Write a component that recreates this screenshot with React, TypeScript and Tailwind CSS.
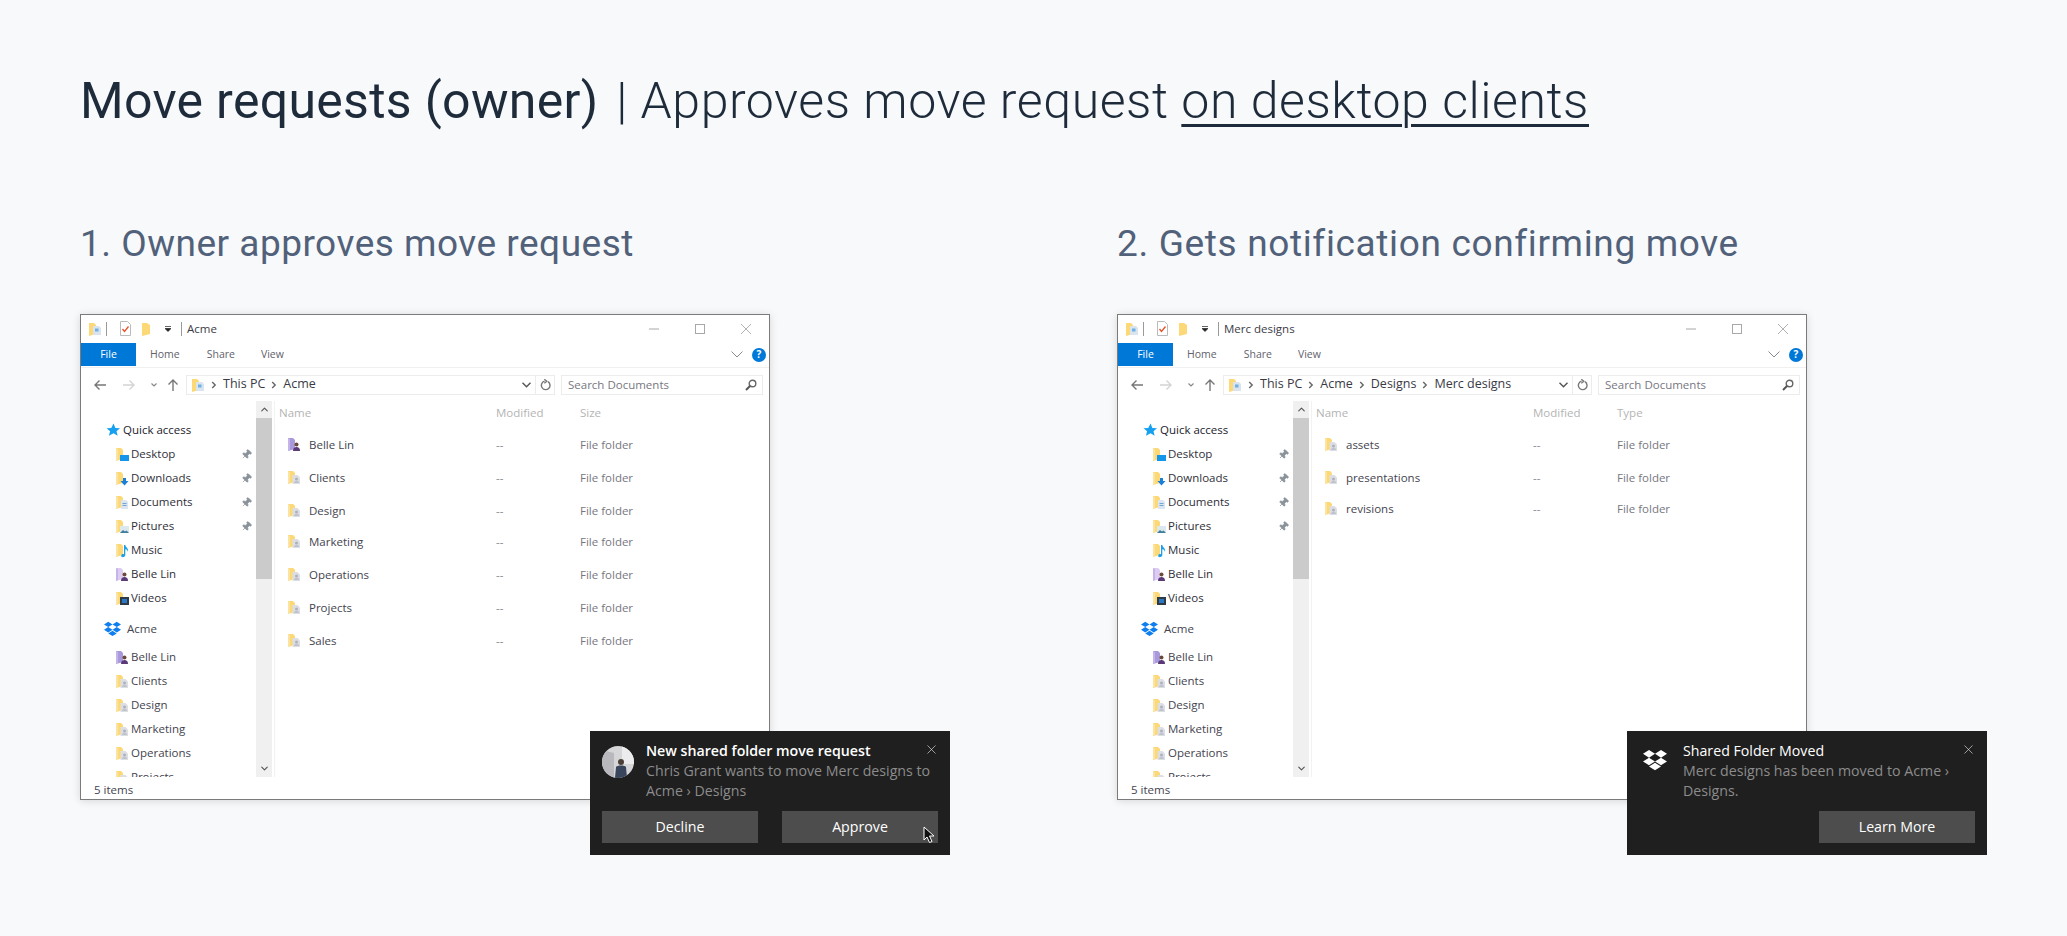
import React from 'react';
import { X, ChevronDown, ChevronUp, Pin } from 'lucide-react';

type FolderKind = 'shared' | 'member' | 'memberLight' | 'desktop' | 'downloads' | 'documents' | 'pictures' | 'music' | 'videos' | 'plain';

const FolderIcon = ({ kind = 'shared' }: { kind?: FolderKind }) => {
  const purple = kind === 'member' || kind === 'memberLight';
  const body = kind === 'member' ? '#a898dc' : kind === 'memberLight' ? '#dcccf2' : '#fcd876';
  return (
    <svg width="14" height="15" viewBox="0 0 14 15" className="shrink-0">
      <path d="M1 1h5l2 2v9l-7 2z" fill={body} />
      <path d="M1 1v13l2-1V2z" fill={purple ? '#c4b4ea' : '#fbe4a2'} />
      {kind === 'shared' && (
        <>
          <path d="M5.500 5h5l2.500 2.500V14H5.500z" fill="#dcdee4" />
          <circle cx="9.500" cy="9" r="1.500" fill="#aeb2bb" />
          <path d="M7 13c0-1.500 1-2.200 2.500-2.200s2.500.7 2.500 2.200z" fill="#bfc3cb" />
        </>
      )}
      {purple && (
        <>
          <circle cx="9.500" cy="7.500" r="2" fill="#6b4a3a" />
          <path d="M6 14c0-3 1.500-4 3.500-4s3.500 1 3.500 4z" fill="#5b3a78" />
        </>
      )}
      {kind === 'desktop' && <rect x="5" y="8" width="9" height="6" fill="#1295ea" />}
      {kind === 'downloads' && <path d="M8 7h3v3h2.500l-4 4.500-4-4.500H8z" fill="#1a7fd6" />}
      {kind === 'documents' && (
        <>
          <path d="M6 5h5l2 2v7H6z" fill="#dbe6f0" />
          <path d="M7.500 8h4v1h-4zM7.500 10h4v1h-4z" fill="#6ea6d8" />
        </>
      )}
      {kind === 'pictures' && (
        <>
          <rect x="5" y="7" width="9" height="7" fill="#dbe8ee" />
          <path d="M5 14l3-3 2 1.500 1.500-1 2.500 2.500z" fill="#3f7d9c" />
        </>
      )}
      {kind === 'music' && <path d="M9 2h1.300c.3 2.500 3.700 3.300 2.700 7-.3-1.700-1.300-2.600-2.700-2.800V12c0 1.300-1.200 2.200-2.500 2.200S6 13.300 6.300 12.200C6.600 11.200 8 10.800 9 11.200z" fill="#1ca0ea" />}
      {kind === 'videos' && (
        <>
          <rect x="5" y="6" width="9" height="8" fill="#2f3a46" />
          <rect x="7" y="8" width="5" height="4" fill="#2b78c2" />
        </>
      )}
    </svg>
  );
};

const ExplorerIcon = () => (
  <svg width="14" height="14" viewBox="0 0 14 14" className="shrink-0">
    <path d="M1 1h5l2 2v9l-7 2z" fill="#fcd876" />
    <path d="M5 4h6l2 2v7H5z" fill="#d9e4ee" />
    <path d="M7 6.500h3.500v3H7z" fill="#6fb0e6" />
  </svg>
);

const DropboxLogo = ({ color, size }: { color: string; size: number }) => (
  <svg width={size} height={size * 0.92} viewBox="0 0 24 22" className="shrink-0">
    <path d="M6 1l6 3.800-6 3.800L0 4.800zM18 1l6 3.800-6 3.800-6-3.800zM0 12.400l6-3.800 6 3.800-6 3.800zM18 8.600l6 3.800-6 3.800-6-3.800zM6 17.500l6-3.800 6 3.800-6 3.800z" fill={color} />
  </svg>
);

const Crumb = () => (
  <svg width="6" height="8" viewBox="0 0 6 8" className="shrink-0">
    <path d="M1.200 1l3 3-3 3" fill="none" stroke="#666" strokeWidth="1.400" />
  </svg>
);

const NavArrow = ({ d, color, className }: { d: string; color: string; className?: string }) => (
  <svg width="12" height="12" viewBox="0 0 12 12" className={`shrink-0 ${className ?? ''}`}>
    <path d={d} fill="none" stroke={color} strokeWidth="1.400" />
  </svg>
);

const navItems: { label: string; kind: FolderKind; pinned?: boolean }[] = [
  { label: 'Desktop', kind: 'desktop', pinned: true },
  { label: 'Downloads', kind: 'downloads', pinned: true },
  { label: 'Documents', kind: 'documents', pinned: true },
  { label: 'Pictures', kind: 'pictures', pinned: true },
  { label: 'Music', kind: 'music' },
  { label: 'Belle Lin', kind: 'memberLight' },
  { label: 'Videos', kind: 'videos' },
];

const acmeItems: { label: string; kind: FolderKind }[] = [
  { label: 'Belle Lin', kind: 'member' },
  { label: 'Clients', kind: 'shared' },
  { label: 'Design', kind: 'shared' },
  { label: 'Marketing', kind: 'shared' },
  { label: 'Operations', kind: 'shared' },
  { label: 'Projects', kind: 'shared' },
];

interface FileRow {
  name: string;
  kind: FolderKind;
  row: string;
}

interface WindowProps {
  title: string;
  crumbs: string[];
  lastCol: string;
  files: FileRow[];
  children: React.ReactNode;
}

const ExplorerWindow = ({ title, crumbs, lastCol, files, children }: WindowProps) => (
  <div className="relative w-[690px] h-[486px] bg-white border border-[#7b7b7b] shadow-[0_1px_8px_rgba(0,0,0,0.14)] font-['Open_Sans',sans-serif] text-[11.5px] text-[#44444f]">
    <div className="h-[28px] flex items-center pl-[7px] pb-[1px]">
      <ExplorerIcon />
      <div className="w-px h-[14px] bg-[#9a9a9a] ml-[4px]" />
      <svg width="13" height="15" viewBox="0 0 13 15" className="ml-[12px]">
        <path d="M1.500.5h7l3 3v11h-10z" fill="#fff" stroke="#bbb" />
        <path d="M3.500 8l2 2.500 4-5" fill="none" stroke="#e8502a" strokeWidth="1.300" />
      </svg>
      <svg width="10" height="14" viewBox="0 0 10 14" className="ml-[10px]">
        <path d="M0 1h5l3 2v9l-8 2z" fill="#fcd876" />
      </svg>
      <svg width="6" height="6" viewBox="0 0 6 6" className="ml-[13px]">
        <path d="M0 .5h6M0 2.500h6l-3 3z" stroke="#222" strokeWidth="0.700" fill="#222" />
      </svg>
      <div className="w-px h-[14px] bg-[#9a9a9a] ml-[10px]" />
      <span className="ml-[5px] text-[#3c3c46]">{title}</span>
      <div className="ml-auto flex items-center gap-[36px] pr-[18px]">
        <svg width="10" height="10" viewBox="0 0 10 10"><path d="M0 5h10" stroke="#a8a8a8" strokeWidth="1" /></svg>
        <svg width="10" height="10" viewBox="0 0 10 10"><rect x=".5" y=".5" width="9" height="9" fill="none" stroke="#a8a8a8" /></svg>
        <svg width="10" height="10" viewBox="0 0 10 10"><path d="M0 0l10 10M10 0L0 10" stroke="#a8a8a8" strokeWidth="0.900" /></svg>
      </div>
    </div>
    <div className="h-[25px] flex items-start border-b border-[#f0f0f0] text-[10.500px] text-[#62626c]">
      <div className="w-[55px] h-[23px] bg-[#0078d7] text-white flex items-center justify-center">File</div>
      <span className="ml-[14px] leading-[23px]">Home</span>
      <span className="ml-[27px] leading-[23px]">Share</span>
      <span className="ml-[26px] leading-[23px]">View</span>
      <div className="ml-auto flex items-center h-[23px] pr-[3px]">
        <svg width="12" height="7" viewBox="0 0 12 7"><path d="M.5.5L6 6l5.500-5.500" fill="none" stroke="#8a8a8a" /></svg>
        <div className="ml-[9px] w-[14px] h-[14px] rounded-full bg-[#0078d7] text-white text-[10px] font-bold flex items-center justify-center">?</div>
      </div>
    </div>
    <div className="h-[33px] flex items-center pl-[13px] pr-[6px]">
      <NavArrow d="M12 6H1M5.500 1.500L1 6l4.500 4.500" color="#777" />
      <NavArrow d="M0 6h11M6.500 1.500L11 6l-4.500 4.500" color="#d4d4d4" className="ml-[17px]" />
      <svg width="6" height="4" viewBox="0 0 6 4" className="ml-[16px]"><path d="M.5.500L3 3 5.500.5" fill="none" stroke="#888" strokeWidth="1.200" /></svg>
      <NavArrow d="M6 12V1M1.500 5.500L6 1l4.500 4.500" color="#777" className="ml-[10px]" />
      <div className="ml-[7px] w-[369px] h-[20px] border border-[#ececec] flex items-center pl-[4px] text-[12.5px] text-[#3a3a44]">
        <ExplorerIcon />
        {crumbs.map((c) => (
          <React.Fragment key={c}>
            <span className="mx-[6px]"><Crumb /></span>
            <span>{c}</span>
          </React.Fragment>
        ))}
        <div className="ml-auto flex items-center h-full">
          <svg width="9" height="6" viewBox="0 0 9 6" className="mr-[4px]"><path d="M.5.800l4 4 4-4" fill="none" stroke="#555" strokeWidth="1.400" /></svg>
          <div className="w-[19px] h-full border-l border-[#ececec] flex items-center justify-center">
            <svg width="11" height="12" viewBox="0 0 11 12"><path d="M8 2.700a4.300 4.300 0 1 1-3.500-.5M4.300.3l2.500 2-2.500 2" fill="none" stroke="#777" strokeWidth="1.400" /></svg>
          </div>
        </div>
      </div>
      <div className="ml-[6px] flex-1 h-[20px] border border-[#ececec] flex items-center pl-[6px] pr-[5px] text-[#77777f]">
        <span>Search Documents</span>
        <svg width="12" height="12" viewBox="0 0 12 12" className="ml-auto">
          <circle cx="7.500" cy="4.500" r="3.300" fill="none" stroke="#666" strokeWidth="1.400" />
          <path d="M5 7L1 11" stroke="#555" strokeWidth="2" />
        </svg>
      </div>
    </div>
    <div className="h-[376px] flex">
      <div className="w-[175px] h-full overflow-hidden pt-[17px] text-[#2f2f39]">
        <div className="h-6 flex items-center pl-[25px] text-[#22222c]">
          <svg width="14" height="14" viewBox="0 0 24 24"><path d="M13 1l3 7.500 8 .5-6 5 2 8-7-4.500L5 22l2-8-6-5 8-.5z" fill="#16a0f0" /></svg>
          <span className="ml-[3px]">Quick access</span>
        </div>
        {navItems.map((n) => (
          <div key={n.label} className="h-6 flex items-center pl-[34px] pr-[4px]">
            <FolderIcon kind={n.kind} />
            <span className="ml-[2px]">{n.label}</span>
            {n.pinned && <Pin size={11} strokeWidth={1.500} className="ml-auto rotate-45 text-[#8a929a] fill-[#8a929a]" />}
          </div>
        ))}
        <div className="h-6 mt-[7px] flex items-center pl-[23px] text-[#44444f]">
          <DropboxLogo color="#0f7ff0" size={17} />
          <span className="ml-[6px]">Acme</span>
        </div>
        <div className="mt-[4px]">
          {acmeItems.map((n) => (
            <div key={n.label} className="h-6 flex items-center pl-[34px] text-[#44444f]">
              <FolderIcon kind={n.kind} />
              <span className="ml-[2px]">{n.label}</span>
            </div>
          ))}
        </div>
      </div>
      <div className="w-[16px] h-full bg-[#f0f0f0] flex flex-col">
        <div className="h-[17px] flex items-center justify-center">
          <ChevronUp size={11} strokeWidth={2.500} className="text-[#555]" />
        </div>
        <div className="h-[161px] bg-[#cbcbcb]" />
        <div className="mt-auto h-[17px] flex items-center justify-center">
          <ChevronDown size={11} strokeWidth={2.500} className="text-[#555]" />
        </div>
      </div>
      <div className="flex-1 ml-[2px] border-l border-[#f2f2f2] pl-[4px]">
        <div className="h-[27px] flex items-center text-[#b4b4b4] pb-[3px]">
          <span className="w-[217px]">Name</span>
          <span className="w-[84px]">Modified</span>
          <span>{lastCol}</span>
        </div>
        {files.map((f) => (
          <div key={f.name} className={`${f.row} flex items-center`}>
            <div className="w-[217px] flex items-center pl-[8px]">
              <FolderIcon kind={f.kind} />
              <span className="ml-[8px]">{f.name}</span>
            </div>
            <span className="w-[84px] text-[#88888f]">--</span>
            <span className="text-[#77777f]">File folder</span>
          </div>
        ))}
      </div>
    </div>
    <div className="h-[22px] flex items-center pl-[13px] pt-[3px] text-[#44444f]">5 items</div>
    {children}
  </div>
);

const Toast = ({ children }: { children: React.ReactNode }) => (
  <div className="absolute left-[509px] top-[416px] w-[360px] h-[124px] bg-[#1f1f1f] px-[12px] pt-[10px] font-['Open_Sans',sans-serif] text-[14.200px] leading-[20px]">
    <X size={15} strokeWidth={1} className="absolute right-[11px] top-[11px] text-[#e8e8e8]" />
    {children}
  </div>
);

const ToastButton = ({ label }: { label: string }) => (
  <div className="w-[156px] h-[32px] bg-[#4d4d4d] text-white flex items-center justify-center">{label}</div>
);

export default function App() {
  return (
    <div className="h-[936px] overflow-hidden bg-[#f7f9fb] pl-[80px] pt-[71px] font-['Roboto',sans-serif]">
      <h1 className="text-[50px] leading-[60px] font-light text-[#1e2b3a] whitespace-nowrap tracking-[0.55px]">
        <span className="font-normal tracking-[0.3px] mr-[5px]">Move requests (owner)</span> | Approves move request{' '}
        <span className="underline decoration-[3px] underline-offset-[6px]">on desktop clients</span>
      </h1>
      <div className="mt-[91px] grid grid-cols-[1037px_1fr]">
        <div>
          <h2 className="text-[37px] leading-[44px] text-[#52617a] tracking-[0.5px]">1. Owner approves move request</h2>
          <div className="mt-[48px]">
            <ExplorerWindow
              title="Acme"
              crumbs={['This PC', 'Acme']}
              lastCol="Size"
              files={[
                { name: 'Belle Lin', kind: 'member', row: 'h-[33px]' },
                { name: 'Clients', kind: 'shared', row: 'h-[33px]' },
                { name: 'Design', kind: 'shared', row: 'h-[33px]' },
                { name: 'Marketing', kind: 'shared', row: 'h-[33px] -mt-[2px]' },
                { name: 'Operations', kind: 'shared', row: 'h-[33px]' },
                { name: 'Projects', kind: 'shared', row: 'h-[33px]' },
                { name: 'Sales', kind: 'shared', row: 'h-[33px]' },
              ]}
            >
              <Toast>
                <div className="flex">
                  <svg width="32" height="32" viewBox="0 0 32 32" className="shrink-0 mt-[5px]">
                    <defs>
                      <clipPath id="avatar"><circle cx="16" cy="16" r="16" /></clipPath>
                    </defs>
                    <g clipPath="url(#avatar)">
                      <rect width="32" height="32" fill="#d6d6d8" />
                      <path d="M0 4l12 3v25H0z" fill="#b9b9bd" />
                      <path d="M20 0h12v18H20z" fill="#ececee" />
                      <circle cx="19" cy="16" r="3" fill="#4a4038" />
                      <path d="M13 32l1-11c1-2 9-2 10 0l1 11z" fill="#38455a" />
                    </g>
                  </svg>
                  <div className="ml-[12px] w-[296px]">
                    <div className="text-white font-semibold">New shared folder move request</div>
                    <div className="text-[#8c8c8c]">Chris Grant wants to move Merc designs to Acme › Designs</div>
                  </div>
                </div>
                <div className="mt-[10px] flex justify-between relative">
                  <ToastButton label="Decline" />
                  <ToastButton label="Approve" />
                  <svg width="12" height="18" viewBox="0 0 12 18" className="absolute right-[3px] top-[15px]">
                    <path d="M1 1v13l3-3 2.500 5.500 2.500-1L6.500 10H11z" fill="#111" stroke="#fff" strokeWidth="1" />
                  </svg>
                </div>
              </Toast>
            </ExplorerWindow>
          </div>
        </div>
        <div>
          <h2 className="text-[37px] leading-[44px] text-[#52617a] tracking-[0.65px]">2. Gets notification confirming move</h2>
          <div className="mt-[48px]">
            <ExplorerWindow
              title="Merc designs"
              crumbs={['This PC', 'Acme', 'Designs', 'Merc designs']}
              lastCol="Type"
              files={[
                { name: 'assets', kind: 'shared', row: 'h-[33px]' },
                { name: 'presentations', kind: 'shared', row: 'h-[33px]' },
                { name: 'revisions', kind: 'shared', row: 'h-[33px] -mt-[2px]' },
              ]}
            >
              <Toast>
                <div className="flex">
                  <div className="mt-[8px] ml-[4px] w-[40px] shrink-0"><DropboxLogo color="#ffffff" size={24} /></div>
                  <div className="w-[290px]">
                    <div className="text-white">Shared Folder Moved</div>
                    <div className="text-[#8c8c8c]">Merc designs has been moved to Acme › Designs.</div>
                  </div>
                </div>
                <div className="mt-[10px] flex justify-end">
                  <ToastButton label="Learn More" />
                </div>
              </Toast>
            </ExplorerWindow>
          </div>
        </div>
      </div>
    </div>
  );
}
